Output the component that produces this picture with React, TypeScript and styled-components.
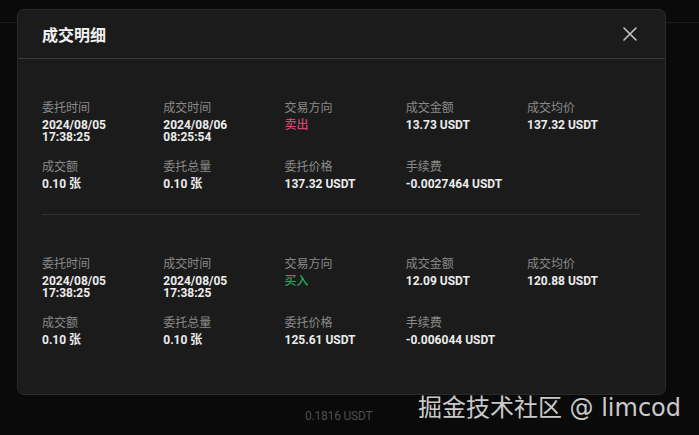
import React from "react";
import styled, { createGlobalStyle } from "styled-components";

const Global = createGlobalStyle`
  html, body { margin: 0; padding: 0; background: #0a0a0a; }
  body { width: 699px; height: 435px; overflow: hidden; font-family: Roboto, "Noto Sans CJK SC", sans-serif; }
  #root { width: 699px; height: 435px; }
`;

const Page = styled.div`
  position: relative;
  width: 699px;
  height: 435px;
  display: flex;
  flex-direction: column;
  background: #0a0a0a;
`;

const TopBar = styled.div`
  height: 22px;
  border-bottom: 1px solid #1d1d1d;
  flex-shrink: 0;
`;

const FooterRow = styled.div`
  margin-top: auto;
  padding: 0 0 11px 305px;
  font-size: 12px;
  line-height: 16px;
  color: #4e4e4e;
  letter-spacing: -0.2px;
`;

const Modal = styled.div`
  position: absolute;
  left: 17px;
  top: 9px;
  width: 649px;
  box-sizing: border-box;
  background: #1b1b1b;
  border: 1px solid #2a2a2a;
  border-radius: 7px;
`;

const Header = styled.div`
  height: 48px;
  display: flex;
  align-items: center;
  justify-content: space-between;
  padding: 0 27px 0 24px;
  border-bottom: 1px solid #3a3a3a;
`;

const Title = styled.div`
  font-family: "Noto Sans CJK SC", sans-serif;
  font-size: 16px;
  font-weight: 700;
  color: #f2f2f2;
`;

const CloseButton = styled.button`
  width: 16px;
  height: 16px;
  padding: 0;
  border: none;
  background: transparent;
  display: flex;
  cursor: pointer;
`;

const Body = styled.div`
  padding: 0 24px 24px;
`;

const Block = styled.div<{ $divider?: boolean }>`
  padding: 41px 0 24px;
  border-top: ${(p) => (p.$divider ? "1px solid #2f2f2f" : "none")};
`;

const Grid = styled.div`
  display: grid;
  grid-template-columns: repeat(4, 121.25px) 1fr;
  row-gap: 16px;
`;

const Cell = styled.div`
  display: flex;
  flex-direction: column;
`;

const Label = styled.div`
  font-size: 12px;
  line-height: 16px;
  color: #8a8a8a;
  margin-bottom: 3px;
`;

const Value = styled.div<{ $tone?: "sell" | "buy" }>`
  font-size: 12px;
  line-height: 12px;
  font-weight: ${(p) => (p.$tone ? 500 : 700)};
  color: ${(p) => (p.$tone === "sell" ? "#d6456f" : p.$tone === "buy" ? "#26a65b" : "#ececec")};
`;

const Watermark = styled.div`
  position: absolute;
  right: 18px;
  bottom: 13px;
  font-family: "DejaVu Sans", "Noto Sans CJK SC", sans-serif;
  font-size: 24px;
  line-height: 28px;
  color: rgba(230, 230, 230, 0.88);
  white-space: nowrap;
  pointer-events: none;
`;

type Item = { label: string; lines: string[]; tone?: "sell" | "buy" };

const records: Item[][] = [
  [
    { label: "委托时间", lines: ["2024/08/05", "17:38:25"] },
    { label: "成交时间", lines: ["2024/08/06", "08:25:54"] },
    { label: "交易方向", lines: ["卖出"], tone: "sell" },
    { label: "成交金额", lines: ["13.73 USDT"] },
    { label: "成交均价", lines: ["137.32 USDT"] },
    { label: "成交额", lines: ["0.10 张"] },
    { label: "委托总量", lines: ["0.10 张"] },
    { label: "委托价格", lines: ["137.32 USDT"] },
    { label: "手续费", lines: ["-0.0027464 USDT"] },
  ],
  [
    { label: "委托时间", lines: ["2024/08/05", "17:38:25"] },
    { label: "成交时间", lines: ["2024/08/05", "17:38:25"] },
    { label: "交易方向", lines: ["买入"], tone: "buy" },
    { label: "成交金额", lines: ["12.09 USDT"] },
    { label: "成交均价", lines: ["120.88 USDT"] },
    { label: "成交额", lines: ["0.10 张"] },
    { label: "委托总量", lines: ["0.10 张"] },
    { label: "委托价格", lines: ["125.61 USDT"] },
    { label: "手续费", lines: ["-0.006044 USDT"] },
  ],
];

export default function App() {
  return (
    <>
      <Global />
      <Page>
        <TopBar />
        <FooterRow>0.1816 USDT</FooterRow>
        <Modal>
          <Header>
            <Title>成交明细</Title>
            <CloseButton aria-label="close">
              <svg width="16" height="16" viewBox="0 0 16 16">
                <path d="M2 2 L14 14 M14 2 L2 14" stroke="#c4c4c4" strokeWidth="1.6" strokeLinecap="round" />
              </svg>
            </CloseButton>
          </Header>
          <Body>
            {records.map((rec, i) => (
              <Block key={i} $divider={i > 0}>
                <Grid>
                  {rec.map((it, j) => (
                    <Cell key={j}>
                      <Label>{it.label}</Label>
                      {it.lines.map((l, k) => (
                        <Value key={k} $tone={it.tone}>
                          {l}
                        </Value>
                      ))}
                    </Cell>
                  ))}
                </Grid>
              </Block>
            ))}
          </Body>
        </Modal>
        <Watermark>掘金技术社区 @ limcod</Watermark>
      </Page>
    </>
  );
}
